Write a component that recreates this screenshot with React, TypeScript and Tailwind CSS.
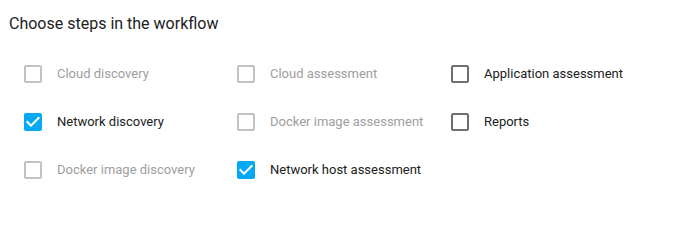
import React from 'react';

type Step = {
  label: string;
  checked?: boolean;
  disabled?: boolean;
};

// laid out column by column, like the reference
const columns: Step[][] = [
  [
    { label: 'Cloud discovery', disabled: true },
    { label: 'Network discovery', checked: true },
    { label: 'Docker image discovery', disabled: true },
  ],
  [
    { label: 'Cloud assessment', disabled: true },
    { label: 'Docker image assessment', disabled: true },
    { label: 'Network host assessment', checked: true },
  ],
  [
    { label: 'Application assessment' },
    { label: 'Reports' },
  ],
];

const CHECKED =
  'M19 3H5c-1.11 0-2 .9-2 2v14c0 1.1.89 2 2 2h14c1.11 0 2-.9 2-2V5c0-1.1-.89-2-2-2zm-9 14l-5-5 1.41-1.41L10 14.17l7.59-7.59L19 8l-9 9z';
const BLANK =
  'M19 5v14H5V5h14m0-2H5c-1.1 0-2 .9-2 2v14c0 1.1.9 2 2 2h14c1.1 0 2-.9 2-2V5c0-1.1-.9-2-2-2z';

const Box: React.FC<{ step: Step }> = ({ step }) => {
  const color = step.checked ? '#03a9f4' : step.disabled ? '#c2c2c2' : '#6f6f6f';
  return (
    <svg width="24" height="24" viewBox="0 0 24 24" className="shrink-0">
      <path d={step.checked ? CHECKED : BLANK} fill={color} />
    </svg>
  );
};

const App: React.FC = () => {
  return (
    <div className="min-h-[251px] w-[682px] bg-white px-[9px] pt-[14px] font-['Roboto',sans-serif]">
      <h2 className="text-[16px] leading-[20px] text-[#212121]">Choose steps in the workflow</h2>

      <div className="mt-[16px] grid grid-cols-[213px_214px_200px] pl-[12px]">
        {columns.map((col, i) => (
          <div key={i} className="flex flex-col">
            {col.map((step) => (
              <div key={step.label} className="flex h-12 items-center">
                <Box step={step} />
                <span
                  className={
                    step.disabled
                      ? 'ml-[12px] text-[13px] text-[#9e9e9e]'
                      : 'ml-[12px] text-[13px] text-[#212121]'
                  }
                >
                  {step.label}
                </span>
              </div>
            ))}
          </div>
        ))}
      </div>
    </div>
  );
};

export default App;
